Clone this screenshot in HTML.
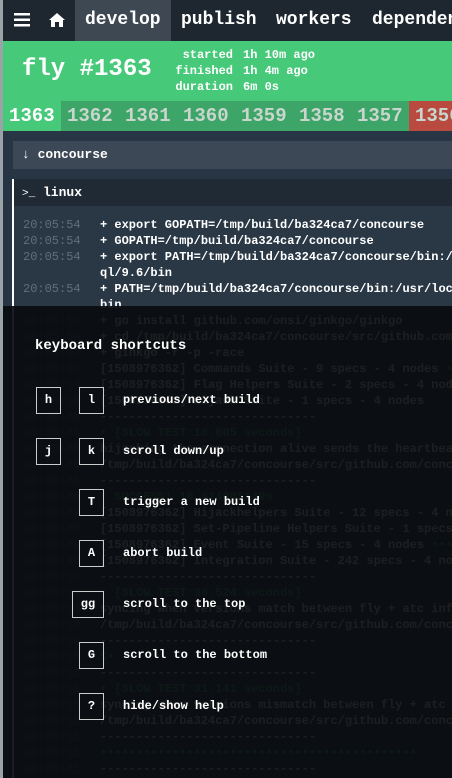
<!DOCTYPE html>
<html><head><style>
*{margin:0;padding:0;box-sizing:border-box}
html,body{width:452px;height:778px;overflow:hidden}
body{background:#273545;font-family:"Liberation Mono",monospace;font-weight:bold;position:relative;color:#fff}
.strip{position:absolute;left:0;top:0;width:3px;height:778px;background:#9aa3a8;z-index:20}
.nav{position:absolute;left:3px;top:0;width:449px;height:41px;background:#1e2730;font-size:18px;white-space:nowrap;overflow:hidden}
.nav span{position:absolute;top:10px}
.hdr{position:absolute;left:3px;top:41px;width:449px;height:60px;background:#47c97a}
.title{position:absolute;left:19px;top:15px;font-size:24px}
.info{position:absolute;top:6px;font-size:12px;line-height:16px}
.tabs{position:absolute;left:3px;top:101px;width:449px;height:30px;background:#3da567;font-size:19px;white-space:nowrap;overflow:hidden}
.tabs span{position:absolute;top:4px;color:#c9d6ce}
.bar{position:absolute;left:13px;top:141px;width:439px;height:28px;background:#3c4855;font-size:13px}
.lin{position:absolute;left:12px;top:179px;width:440px;height:27px;background:#1f2a35;border-left:2px solid #fff;font-size:13px}
.log{position:absolute;left:12px;top:206px;width:440px;height:572px;background:#2a3846;border-left:2px solid #fff;font-size:12px;line-height:16px;white-space:pre;overflow:hidden;padding-top:11px}
.l{display:block}
.t{display:inline-block;width:86px;padding-left:9px;color:#5f6f7c;font-weight:normal}
.g{color:#46b86e}
.ov{position:absolute;left:3px;top:306px;width:449px;height:472px;background:rgba(9,11,14,0.92)}
.kh{position:absolute;left:35px;top:338px;font-size:14px}
.k{position:absolute;width:25px;height:27px;border:1px solid #ccc;font-size:12px;text-align:center;line-height:25px}
.d{position:absolute;left:123px;font-size:12px}
</style></head><body>
<div class="strip"></div>
<div class="nav">
<svg style="position:absolute;left:11px;top:13px" width="16" height="14"><rect y="0" width="16" height="2.5" fill="#fff"/><rect y="5.5" width="16" height="2.5" fill="#fff"/><rect y="11" width="16" height="2.5" fill="#fff"/></svg>
<svg style="position:absolute;left:46px;top:13px" width="16" height="14"><path d="M8 0 L16 7 L14 7 L14 14 L10 14 L10 9 L6 9 L6 14 L2 14 L2 7 L0 7 Z" fill="#fff"/></svg>
<div style="position:absolute;left:72px;top:0;width:96px;height:41px;background:#3d4852"></div>
<span style="left:82px">develop</span><span style="left:178px">publish</span><span style="left:273px">workers</span><span style="left:369px">dependencies</span>
</div>
<div class="hdr">
<div class="title">fly #1363</div>
<div class="info" style="left:172px;width:58px;text-align:right">started<br>finished<br>duration</div>
<div class="info" style="left:240px">1h 10m ago<br>1h 4m ago<br>6m 0s</div>
</div>
<div class="tabs">
<div style="position:absolute;left:0;top:0;width:58px;height:30px;background:#47c97a"></div>
<div style="position:absolute;left:406px;top:0;width:50px;height:30px;background:#b84a3f"></div>
<span style="left:6px;color:#fff">1363</span><span style="left:64px">1362</span><span style="left:122px">1361</span><span style="left:180px">1360</span><span style="left:238px">1359</span><span style="left:296px">1358</span><span style="left:354px">1357</span><span style="left:412px">1356</span>
</div>
<div class="bar"><span style="position:absolute;left:9px;top:6px">&#8595; concourse</span></div>
<div class="lin"><span style="position:absolute;left:8px;top:6px"><span style="font-weight:normal;font-size:11px">&gt;_</span> linux</span></div>
<div class="log"><span class="l"><span class="t">20:05:54</span>+ export GOPATH=/tmp/build/ba324ca7/concourse</span><span class="l"><span class="t">20:05:54</span>+ GOPATH=/tmp/build/ba324ca7/concourse</span><span class="l"><span class="t">20:05:54</span>+ export PATH=/tmp/build/ba324ca7/concourse/bin:/usr</span><span class="l"><span class="t"></span>ql/9.6/bin</span><span class="l"><span class="t">20:05:54</span>+ PATH=/tmp/build/ba324ca7/concourse/bin:/usr/local/</span><span class="l"><span class="t"></span>bin</span><span class="l"><span class="t">20:05:54</span>+ go install github.com/onsi/ginkgo/ginkgo</span><span class="l"><span class="t">20:05:54</span>+ cd /tmp/build/ba324ca7/concourse/src/github.com/co</span><span class="l"><span class="t">20:06:02</span>+ ginkgo -r -p -race</span><span class="l"><span class="t">20:06:02</span>[1508976362] Commands Suite - 9 specs - 4 nodes <span class="g">•</span></span><span class="l"><span class="t">20:08:14</span>[1508976362] Flag Helpers Suite - 2 specs - 4 nodes</span><span class="l"><span class="t">20:08:16</span>[1508976362] Hijack Suite - 1 specs - 4 nodes</span><span class="l"><span class="t">20:08:26</span>------------------------------</span><span class="l"><span class="t">20:08:26</span><span class="g">• [SLOW TEST:10.005 seconds]</span></span><span class="l"><span class="t">20:08:26</span>hijacking the connection alive sends the heartbeat</span><span class="l"><span class="t">20:08:26</span>/tmp/build/ba324ca7/concourse/src/github.com/conc</span><span class="l"><span class="t">20:08:26</span>------------------------------</span><span class="l"><span class="t">20:08:26</span><span class="g">• SUCCESS! 10.014005149s</span></span><span class="l"><span class="t">20:08:27</span>[1508976362] Hijackhelpers Suite - 12 specs - 4 n</span><span class="l"><span class="t">20:08:28</span>[1508976362] Set-Pipeline Helpers Suite - 1 specs</span><span class="l"><span class="t">20:08:29</span>[1508976362] Event Suite - 15 specs - 4 nodes <span class="g">•••</span></span><span class="l"><span class="t">20:08:30</span>[1508976362] Integration Suite - 242 specs - 4 no</span><span class="l"><span class="t">20:09:10</span>------------------------------</span><span class="l"><span class="t">20:09:10</span><span class="g">• [SLOW TEST:30.524 seconds]</span></span><span class="l"><span class="t">20:09:10</span>syncing when versions match between fly + atc info</span><span class="l"><span class="t">20:09:10</span>/tmp/build/ba324ca7/concourse/src/github.com/conc</span><span class="l"><span class="t">20:09:10</span>------------------------------</span><span class="l"><span class="t">20:09:10</span><span class="g">S•</span></span><span class="l"><span class="t">20:09:11</span>------------------------------</span><span class="l"><span class="t">20:09:11</span><span class="g">• [SLOW TEST:31.141 seconds]</span></span><span class="l"><span class="t">20:09:11</span>syncing when versions mismatch between fly + atc</span><span class="l"><span class="t">20:09:11</span>/tmp/build/ba324ca7/concourse/src/github.com/conc</span><span class="l"><span class="t">20:09:11</span>------------------------------</span><span class="l"><span class="t">20:09:11</span><span class="g">••••••••••••••••••••••••••••••••••••••••••••</span></span><span class="l"><span class="t">20:09:21</span>------------------------------</span></div>
<div class="ov"></div>
<div class="kh">keyboard shortcuts</div>
<div class="k" style="left:36px;top:387px">h</div><div class="k" style="left:79px;top:387px">l</div><div class="d" style="top:393px">previous/next build</div>
<div class="k" style="left:36px;top:438px">j</div><div class="k" style="left:79px;top:438px">k</div><div class="d" style="top:444px">scroll down/up</div>
<div class="k" style="left:79px;top:489px">T</div><div class="d" style="top:495px">trigger a new build</div>
<div class="k" style="left:79px;top:540px">A</div><div class="d" style="top:546px">abort build</div>
<div class="k" style="left:72px;top:591px;width:32px">gg</div><div class="d" style="top:597px">scroll to the top</div>
<div class="k" style="left:79px;top:642px">G</div><div class="d" style="top:648px">scroll to the bottom</div>
<div class="k" style="left:79px;top:693px">?</div><div class="d" style="top:699px">hide/show help</div>
</body></html>
